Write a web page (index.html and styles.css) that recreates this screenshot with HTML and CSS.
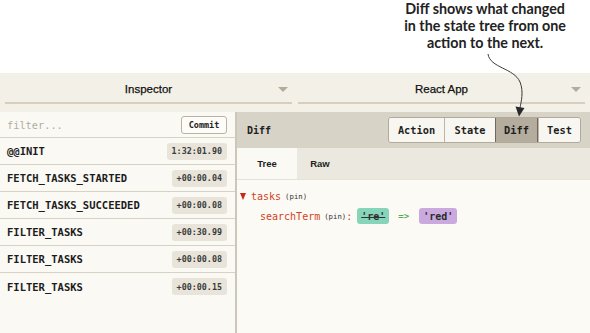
FILE: index.html
```html
<!DOCTYPE html>
<html>
<head>
<meta charset="utf-8">
<link rel="stylesheet" href="styles.css">
</head>
<body>
<div class="note">
  <p class="note-text">Diff shows what changed<br>in the state tree from one<br>action to the next.</p>
  <svg class="arrow" width="590" height="120" viewBox="0 0 590 120">
    <path d="M488 54 C 490 68, 514 68, 520 82 C 524 92, 521 102, 520 108" fill="none" stroke="#3a3a3a" stroke-width="1"/>
    <path d="M515.5 106.5 L524.5 108 L519 116.5 Z" fill="#2a2a2a"/>
  </svg>
</div>
<div class="devtools">
  <div class="topbar">
    <div class="select"><span class="select-label">Inspector</span><span class="caret"></span></div>
    <div class="select"><span class="select-label">React App</span><span class="caret"></span></div>
  </div>
  <div class="main">
    <div class="actions">
      <div class="filter-row">
        <span class="filter">filter...</span>
        <span class="commit">Commit</span>
      </div>
      <div class="row"><span class="name">@@INIT</span><span class="time">1:32:01.90</span></div>
      <div class="row"><span class="name">FETCH_TASKS_STARTED</span><span class="time">+00:00.04</span></div>
      <div class="row"><span class="name">FETCH_TASKS_SUCCEEDED</span><span class="time">+00:00.08</span></div>
      <div class="row"><span class="name">FILTER_TASKS</span><span class="time">+00:30.99</span></div>
      <div class="row"><span class="name">FILTER_TASKS</span><span class="time">+00:00.08</span></div>
      <div class="row last"><span class="name">FILTER_TASKS</span><span class="time">+00:00.15</span></div>
    </div>
    <div class="inspector">
      <div class="header">
        <span class="title">Diff</span>
        <div class="btn-group">
          <span class="btn">Action</span>
          <span class="btn">State</span>
          <span class="btn active">Diff</span>
          <span class="btn">Test</span>
        </div>
      </div>
      <div class="tabs">
        <span class="tab active">Tree</span>
        <span class="tab">Raw</span>
      </div>
      <div class="tree">
        <div class="node"><span class="tri"></span><span class="key">tasks</span><span class="pin">(pin)</span></div>
        <div class="node child"><span class="key">searchTerm</span><span class="pin">(pin)</span><span class="colon">:</span><span class="old">'re'</span><span class="to">=&gt;</span><span class="new">'red'</span></div>
      </div>
    </div>
  </div>
</div>
</body>
</html>
```

FILE: styles.css
```css
* { box-sizing: border-box; }
html, body { margin: 0; padding: 0; }
body {
  width: 590px;
  height: 333px;
  overflow: hidden;
  background: #ffffff;
  font-family: "DejaVu Sans Mono", monospace;
  color: #222;
}

.note {
  position: relative;
  height: 73px;
  display: flex;
  justify-content: flex-end;
  padding-right: 24px;
}
.note-text {
  margin: 0;
  font-family: Lato, "Open Sans", sans-serif;
  font-weight: 700;
  font-size: 14.3px;
  line-height: 17px;
  text-align: center;
  color: #222;
}
.arrow {
  position: absolute;
  left: 0;
  top: 0;
  pointer-events: none;
  z-index: 5;
}

.devtools {
  background: #f3f0e7;
  height: 260px;
  display: flex;
  flex-direction: column;
}

.topbar {
  display: flex;
  gap: 6px;
  padding: 4px 5px 8px 5px;
}
.select {
  flex: 1;
  height: 27px;
  display: flex;
  align-items: center;
  border-bottom: 2px solid #d6cfbf;
  padding-left: 14px;
  padding-bottom: 1px;
}
.select-label {
  flex: 1;
  text-align: center;
  font-family: "Liberation Sans", Arial, sans-serif;
  font-size: 11.5px;
  color: #111;
  -webkit-text-stroke: 0.25px #111;
}
.caret {
  width: 0;
  height: 0;
  border-left: 5px solid transparent;
  border-right: 5px solid transparent;
  border-top: 5px solid #b3ab9c;
  margin-right: 4px;
}

.main {
  flex: 1;
  display: flex;
  min-height: 0;
}

.actions {
  width: 237px;
  background: #fbf9f4;
  border-right: 2px solid #cdc7b9;
  display: flex;
  flex-direction: column;
}
.filter-row {
  height: 26px;
  border-bottom: 1px solid #d8d2c4;
  display: flex;
  align-items: center;
  justify-content: space-between;
  padding: 0 8px 0 7px;
}
.filter {
  font-size: 10.3px;
  color: #b2ada2;
}
.commit {
  width: 46px;
  height: 18px;
  display: flex;
  align-items: center;
  justify-content: center;
  background: #fdfcf9;
  border: 1px solid #b9b3a6;
  border-radius: 3px;
  font-size: 8.5px;
  font-weight: 700;
  color: #222;
}
.row {
  height: 27px;
  border-bottom: 1px solid #d8d2c4;
  display: flex;
  align-items: center;
  justify-content: space-between;
  padding: 0 8px 0 7px;
}
.row.last { border-bottom: none; }
.name {
  font-size: 10.5px;
  font-weight: 700;
  color: #1c1c1c;
}
.time {
  height: 17px;
  display: flex;
  align-items: center;
  padding: 0 5px;
  background: #e8e4da;
  border-radius: 3px;
  font-size: 8.4px;
  font-weight: 700;
  color: #3c3c3c;
}

.inspector {
  flex: 1;
  display: flex;
  flex-direction: column;
  background: #fcfaf5;
}
.header {
  height: 36px;
  background: #d8d3c7;
  display: flex;
  align-items: center;
  justify-content: space-between;
  padding: 0 9px 0 10px;
}
.title {
  font-size: 10px;
  font-weight: 700;
  color: #222;
}
.btn-group {
  display: flex;
  height: 26px;
  border: 1px solid #b1aa9b;
  border-radius: 3px;
  overflow: hidden;
}
.btn {
  display: flex;
  align-items: center;
  justify-content: center;
  background: #f8f6f0;
  border-left: 1px solid #bdb6a7;
  font-size: 10.3px;
  font-weight: 700;
  color: #1e1e1e;
}
.btn:first-child { border-left: none; width: 55px; }
.btn:nth-child(2) { width: 51px; }
.btn:nth-child(3) { width: 43px; }
.btn:nth-child(4) { width: 42px; }
.btn.active {
  background: #b4ac9d;
  border: 1px solid #6f685b;
  margin-top: -1px;
  margin-bottom: -1px;
}

.tabs {
  height: 32px;
  display: flex;
  background: #ebe8df;
  border-bottom: 1px solid #e6e2d8;
}
.tab {
  width: 60px;
  display: flex;
  align-items: center;
  justify-content: center;
  font-family: "Liberation Sans", Arial, sans-serif;
  font-weight: 700;
  font-size: 9.5px;
  color: #1e1e1e;
}
.tab.active {
  background: #fbf9f4;
}
.tab:nth-child(2) { width: 46px; }

.tree {
  padding: 6px 0 0 3px;
}
.node {
  height: 20px;
  display: flex;
  align-items: center;
}
.node.child {
  padding-left: 20px;
}
.tri {
  width: 0;
  height: 0;
  border-left: 3.5px solid transparent;
  border-right: 3.5px solid transparent;
  border-top: 7px solid #c9271a;
  margin-right: 5px;
}
.key {
  font-size: 10px;
  color: #d2431d;
}
.pin {
  font-size: 7.3px;
  color: #333;
  margin-left: 4px;
}
.colon {
  font-size: 10px;
  color: #d2431d;
  margin-right: 5px;
}
.old {
  height: 16px;
  display: flex;
  align-items: center;
  padding: 0 4px;
  background: #86d4b9;
  border-radius: 3px;
  font-size: 10px;
  font-weight: 700;
  color: #333;
  text-decoration: line-through;
}
.to {
  font-size: 9px;
  font-weight: 700;
  color: #55aa55;
  margin: 0 10px 0 9px;
}
.new {
  height: 16px;
  display: flex;
  align-items: center;
  padding: 0 4px;
  background: #caaade;
  border-radius: 3px;
  font-size: 10px;
  font-weight: 700;
  color: #2a2a2a;
}
```
